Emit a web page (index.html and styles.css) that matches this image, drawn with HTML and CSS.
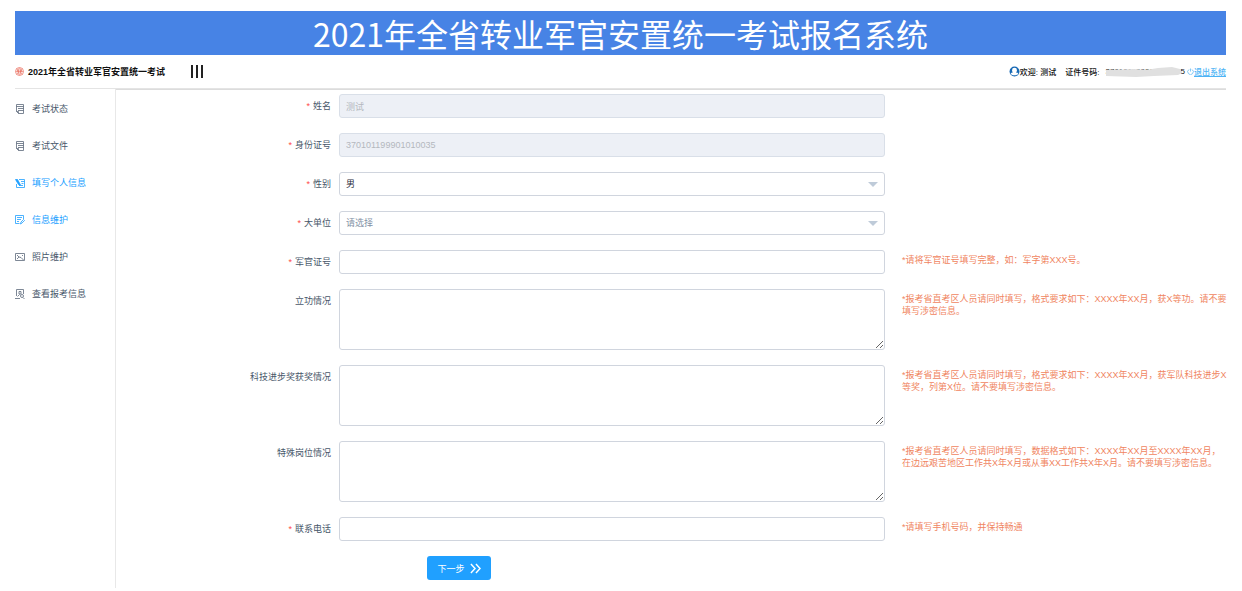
FILE: index.html
```
<!DOCTYPE html>
<html lang="zh-CN">
<head>
	<meta charset="utf-8">
	<meta name="viewport" content="width=device-width, initial-scale=1">
	<title>2021年全省转业军官安置统一考试报名系统</title>
	<link rel="stylesheet" href="styles.css">
</head>
<body>
	<h1 class="banner">2021年全省转业军官安置统一考试报名系统</h1>

	<header class="topbar">
		<svg class="logo" viewBox="0 0 18 18" fill="none" stroke="#e8604f">
			<circle cx="9" cy="9" r="8" stroke-width="1.4"/>
			<path d="M2 9h14M4 6l5-3 5 3M5 9V6h8v3M4 12l5 3 5-3M7 6v6M11 6v6M5 12h8" stroke-width="1.2"/>
		</svg>
		<strong class="exam-name">2021年全省转业军官安置统一考试</strong>
		<button class="menu-toggle" type="button" aria-label="折叠菜单"><i></i><i></i><i></i></button>
		<div class="user">
			<svg class="user-icon" viewBox="0 0 20 20">
				<circle cx="10" cy="10" r="9" fill="#1769b5"/>
				<path d="M10 3a4.500 4.500 0 0 1 4.500 4.500c0 2-1 3.500-2 4.500 2 0 4 1 4.500 2-3 4-11 4-14 0 .5-1 2.500-2 4.500-2-1-1-2-2.500-2-4.500A4.500 4.500 0 0 1 10 3z" fill="#fff"/>
			</svg>
			<span>欢迎: 测试</span>
			<span class="id-label">证件号码:</span>
			<span class="id-number">370101199901010035
				<svg class="mask" viewBox="0 0 76 10" preserveAspectRatio="none">
					<path d="M0 3l28-1 12 1 12-2 14-1 8 2 2 4-4 2-24 1-18 1-30-1z" fill="#e0e0e0"/>
				</svg>
			</span>
			<a class="logout" href="#">
				<svg viewBox="0 0 14 14" fill="none" stroke="#4db3f5" stroke-width="1.4">
					<path d="M4 3a5.500 5.500 0 1 0 6 0M7 1v6"/>
				</svg><span>退出系统</span>
			</a>
		</div>
	</header>

	<div class="layout">
		<nav class="sidebar">
			<a href="#">
				<svg viewBox="0 0 10 10"><path d="M1.500.5h7v9h-5l-2-2zM1.500 2.500h7M3 4.500h5.500M3 6.500h5.500M1.500 7.500h2v2"/></svg>
				考试状态
			</a>
			<a href="#">
				<svg viewBox="0 0 10 10"><path d="M1.500.5h7v9h-5l-2-2zM1.500 2.500h7M3 4.500h5.500M3 6.500h5.500M1.500 7.500h2v2"/></svg>
				考试文件
			</a>
			<a class="active" href="#">
				<svg viewBox="0 0 10 10"><path d="M4 1.500h5.500v8h-8V6M6 3.500h3.500M6.500 5.500h2M4 7.500h4"/><path d="M.5 1.500h2l3 5.500-.5.500-1.500-1z" fill="#20a0ff"/></svg>
				填写个人信息
			</a>
			<a class="active" href="#">
				<svg viewBox="0 0 10 10"><path d="M8.500 4V.5h-8v8h4M2 2.500h5M2 4.500h4M2 6.500h2M5.500 9l.5-2 2.500-2.500 1 1L7 8z"/></svg>
				信息维护
			</a>
			<a href="#">
				<svg viewBox="0 0 10 10"><path d="M.5 1.500h9v7h-9zM2 3l2 2 2 .5L8.500 8M2 7l2-2M7 3.500h1"/></svg>
				照片维护
			</a>
			<a href="#">
				<svg viewBox="0 0 10 10"><path d="M1.500 7V.5h7V5M0 9.500h5M2.500 7.500l2-2M4 2.500h2v2.500H4zM8 8.500L9.500 10"/><circle cx="7" cy="7" r="1.500"/></svg>
				查看报考信息
			</a>
		</nav>

		<main class="content">
			<form class="form">
				<div class="row">
					<label class="required" for="name">姓名</label>
					<input id="name" type="text" value="测试" disabled>
				</div>
				<div class="row">
					<label class="required" for="idcard">身份证号</label>
					<input id="idcard" type="text" value="370101199901010035" disabled>
				</div>
				<div class="row">
					<label class="required" for="sex">性别</label>
					<div class="select">
						<select id="sex">
							<option>男</option>
							<option>女</option>
						</select>
					</div>
				</div>
				<div class="row">
					<label class="required" for="unit">大单位</label>
					<div class="select">
						<select id="unit" class="empty">
							<option>请选择</option>
						</select>
					</div>
				</div>
				<div class="row">
					<label class="required" for="officer">军官证号</label>
					<input id="officer" type="text">
					<p class="hint">*请将军官证号填写完整，如：军字第XXX号。</p>
				</div>
				<div class="row">
					<label for="merit">立功情况</label>
					<textarea id="merit"></textarea>
					<p class="hint">*报考省直考区人员请同时填写，格式要求如下：XXXX年XX月，获X等功。请不要<br>填写涉密信息。</p>
				</div>
				<div class="row">
					<label for="award">科技进步奖获奖情况</label>
					<textarea id="award"></textarea>
					<p class="hint">*报考省直考区人员请同时填写，格式要求如下：XXXX年XX月，获军队科技进步X<br>等奖，列第X位。请不要填写涉密信息。</p>
				</div>
				<div class="row">
					<label for="post">特殊岗位情况</label>
					<textarea id="post"></textarea>
					<p class="hint">*报考省直考区人员请同时填写，数据格式如下：XXXX年XX月至XXXX年XX月，<br>在边远艰苦地区工作共X年X月或从事XX工作共X年X月。请不要填写涉密信息。</p>
				</div>
				<div class="row">
					<label class="required" for="phone">联系电话</label>
					<input id="phone" type="tel">
					<p class="hint">*请填写手机号码，并保持畅通</p>
				</div>
				<div class="row">
					<div class="actions">
						<button class="next" type="button">下一步
							<svg viewBox="0 0 12 12" fill="none" stroke="#fff" stroke-width="1.6"><path d="M1 1l4.500 5L1 11M6.500 1L11 6l-4.500 5"/></svg>
						</button>
					</div>
				</div>
			</form>
		</main>
	</div>
</body>
</html>
```
FILE: styles.css
```
* {
	box-sizing: border-box;
}

body {
	display: flex;
	flex-direction: column;
	min-height: 100vh;
	margin: 0;
	padding: 11px 16px 3px 15px;
	background: #fff;
	color: #48576a;
	font-family: "Liberation Sans", "Noto Sans CJK SC", sans-serif;
	font-size: 9px;
}

input, select, textarea, button {
	font-family: inherit;
	font-size: 9px;
}

a {
	color: inherit;
	text-decoration: none;
}

/* header */
.banner {
	margin: 0;
	background: #4783e5;
	color: #fff;
	font-family: KaiTi, "Noto Sans CJK SC", sans-serif;
	font-size: 32px;
	font-weight: 400;
	line-height: 44px;
	text-align: center;
	white-space: nowrap;
}

.topbar {
	display: flex;
	align-items: center;
	height: 34px;
	border-bottom: 1px solid #e4e4e4;
	color: #111;
}

.logo {
	width: 9px;
	height: 9px;
	margin-right: 4px;
}

.menu-toggle {
	display: flex;
	gap: 3px;
	margin-left: 26px;
	padding: 0;
	border: 0;
	background: none;
}

.menu-toggle i {
	width: 2px;
	height: 13px;
	background: #222;
}

.user {
	display: flex;
	align-items: center;
	margin-left: auto;
	font-size: 8px;
	font-weight: 500;
	white-space: nowrap;
}

.user-icon {
	width: 11px;
	height: 11px;
}

.id-label {
	margin: 0 6px 0 9px;
}

.id-number {
	position: relative;
}

.mask {
	position: absolute;
	top: 0;
	left: 0;
	width: 76px;
	height: 10px;
}

.logout {
	display: flex;
	align-items: center;
	margin-left: 2px;
	color: #4db3f5;
}

.logout span {
	text-decoration: underline;
}

.logout svg {
	width: 7px;
	height: 7px;
}

.layout {
	display: flex;
	flex: 1;
}

/* left menu */
.sidebar {
	display: flex;
	flex-direction: column;
	flex: none;
	width: 101px;
	padding-top: 1px;
	border-right: 1px solid #e8e8e8;
}

.sidebar a {
	display: flex;
	align-items: center;
	gap: 7px;
	height: 37px;
}

.sidebar svg {
	width: 10px;
	height: 10px;
	fill: none;
	stroke: #5d6a7b;
	stroke-width: 0.8;
}

.sidebar .active {
	color: #20a0ff;
}

.sidebar .active svg {
	stroke: #20a0ff;
}

/* form */
.content {
	flex: 1;
	border-top: 1px solid #dcdcdc;
}

.form {
	display: flex;
	flex-direction: column;
	gap: 15px;
	padding-top: 4px;
}

.row {
	display: grid;
	grid-template-columns: 215px 1fr 341px;
	align-items: start;
}

.row label {
	padding-top: 6px;
	line-height: 13px;
	text-align: right;
}

.required::before {
	content: "*";
	margin-right: 3px;
	color: #ff4949;
}

.row input,
.row select,
.row textarea {
	display: block;
	width: 100%;
	height: 24px;
	padding: 0 6px;
	border: 1px solid #d0d5de;
	border-radius: 3px;
	background: #fff;
	color: #1f2d3d;
}

.row > input,
.row > textarea,
.select {
	margin-left: 8px;
}

.row > input,
.row > textarea {
	width: calc(100% - 8px);
}

.row textarea {
	height: 61px;
	resize: vertical;
}

.row input:disabled {
	background: #edf0f6;
	border-color: #d9dfe8;
	color: #b4b8be;
}

.select {
	position: relative;
}

.select select {
	appearance: none;
}

.select .empty {
	color: #8391a5;
}

.select::after {
	content: "";
	position: absolute;
	top: 10px;
	right: 7px;
	border: 5px solid transparent;
	border-top-color: #bfcbd9;
	border-bottom: 0;
	pointer-events: none;
}

.hint {
	margin: 0;
	padding: 4px 0 0 17px;
	color: #f0855f;
	line-height: 12px;
	white-space: nowrap;
}

.actions {
	grid-column: 2;
	padding-left: 96px;
}

.next {
	display: flex;
	align-items: center;
	justify-content: center;
	gap: 5px;
	width: 64px;
	height: 24px;
	border: 0;
	border-radius: 3px;
	background: #20a0ff;
	color: #fff;
}

.next svg {
	width: 11px;
	height: 11px;
}
```
